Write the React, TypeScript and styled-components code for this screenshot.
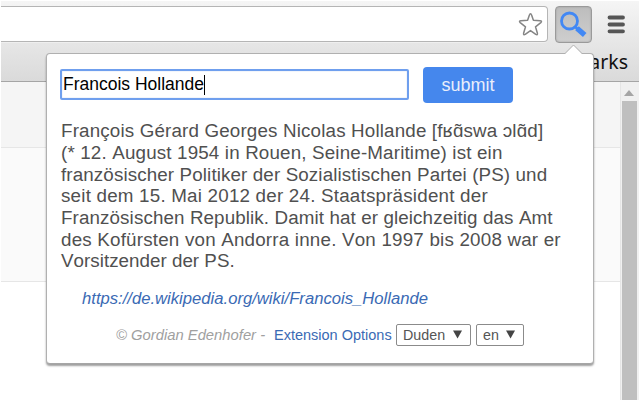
import React from "react";
import styled, { createGlobalStyle } from "styled-components";

const Global = createGlobalStyle`
  * { box-sizing: border-box; }
  body { margin: 0; background: #fff; font-family: "Liberation Sans", Arial, sans-serif; overflow: hidden; }
`;

const Window = styled.div`
  position: relative;
  width: 640px;
  height: 400px;
  padding: 1px 1px 0 1px;
  display: flex;
  flex-direction: column;
  background: #fff;
  overflow: hidden;
`;

const Chrome = styled.header`
  height: 81px;
  flex: none;
  display: flex;
  flex-direction: column;
  background: linear-gradient(#f5f5f5, #e7e7e7 50%, #dadada);
  border-bottom: 1px solid #a5a5a5;
`;

const Toolbar = styled.div`
  height: 42px;
  padding-top: 5px;
  display: flex;
  align-items: flex-start;
`;

const AddressBar = styled.div`
  width: 547px;
  height: 36px;
  padding-right: 4px;
  display: flex;
  align-items: center;
  justify-content: flex-end;
  background: #fff;
  border: 1px solid #b5b5b5;
  border-left: 0;
  border-radius: 0 4px 4px 0;
  box-shadow: 0 1px 0 #efefef;
`;

const ExtensionButton = styled.div`
  width: 37px;
  height: 37px;
  margin-left: 7px;
  display: flex;
  background: linear-gradient(#bdbdbd, #cecece);
  border: 1px solid #9a9a9a;
  border-radius: 4px;
  box-shadow: inset 0 0 2px #999;
`;

const MenuIcon = styled.svg`
  margin: 9px 0 0 15px;
`;

const Bookmarks = styled.div`
  flex: 1;
  padding-right: 11px;
  display: flex;
  justify-content: flex-end;
  font: 19.5px/37px "Noto Sans", sans-serif;
  color: #111;
`;

const Content = styled.main`
  flex: 1;
  display: flex;
`;

const Page = styled.div`
  flex: 1;
`;

const Band = styled.div<{ $height: number; $shade: string }>`
  height: ${(p) => p.$height}px;
  background: ${(p) => p.$shade};
  border-bottom: 1px solid #e6e6e6;
`;

const Scrollbar = styled.div`
  width: 19px;
  padding: 8px 2px 0 0;
  display: flex;
  flex-direction: column;
  align-items: center;
  background: #f0f0f0;
  border-left: 1px solid #e5e5e5;
`;

const Thumb = styled.div`
  width: 15px;
  flex: 1;
  margin-top: 5px;
  background: #bfbfbf;
`;

const Popup = styled.section`
  position: absolute;
  left: 46px;
  top: 53px;
  width: 548px;
  height: 311px;
  padding: 13px 14px 0 13px;
  background: #fff;
  border: 1px solid #b0b0b0;
  border-bottom-color: #a6a6a6;
  border-radius: 4px;
  box-shadow: 0 2px 2px rgba(0, 0, 0, 0.38);
`;

const Arrow = styled.svg`
  position: absolute;
  left: 517px;
  top: -10px;
`;

const SearchRow = styled.form`
  display: flex;
  align-items: flex-start;
  gap: 14px;
`;

const Query = styled.div`
  width: 349px;
  height: 31px;
  margin-top: 2px;
  padding: 1px 0 1px 1px;
  display: flex;
  align-items: center;
  border: 2px solid #6f9fee;
  border-radius: 2px;
  font-size: 17.5px;
  line-height: 25px;
  white-space: nowrap;
  color: #000;
  box-shadow: inset 0 0 1px #86a4d8;
`;

const Caret = styled.span`
  width: 1px;
  height: 20px;
  background: #000;
`;

const Submit = styled.button`
  width: 90px;
  height: 36px;
  padding: 0;
  border: 0;
  border-radius: 4px;
  background: #4587ed;
  color: #e9eefb;
  font: 18px "Liberation Sans", Arial, sans-serif;
`;

const Extract = styled.p`
  margin: 17.4px 0 0 1px;
  display: flex;
  flex-direction: column;
  font-size: 18.8px;
  line-height: 21.65px;
  white-space: nowrap;
  font-kerning: none;
  color: #505050;
`;

const Line = styled.span<{ $spacing?: number }>`
  letter-spacing: ${(p) => p.$spacing ?? 0}px;
`;

const Source = styled.a`
  display: block;
  margin: 16.6px 0 0 22px;
  font-size: 16.65px;
  line-height: 20px;
  font-style: italic;
  white-space: nowrap;
  color: #3a6ab4;
`;

const Footer = styled.footer`
  margin: 15px 0 0 56px;
  display: flex;
  align-items: center;
  font-size: 14.5px;
  line-height: 22px;
  white-space: nowrap;
`;

const Credit = styled.span`
  width: 158px;
  font-size: 14.8px;
  font-style: italic;
  color: #a0a0a0;
`;

const Options = styled.a`
  width: 122px;
  color: #3a6ab4;
`;

const Select = styled.div<{ $width: number }>`
  width: ${(p) => p.$width}px;
  height: 22px;
  margin-right: 5px;
  padding: 0 8px 0 6px;
  display: flex;
  align-items: center;
  justify-content: space-between;
  border: 1px solid #8b8b8b;
  border-radius: 2px;
  font-size: 14.3px;
  color: #555;
`;

function Triangle() {
  return (
    <svg width="9" height="9" viewBox="0 0 9 9">
      <path d="M0 0.5H9L4.5 8.5Z" fill="#444" />
    </svg>
  );
}

const lines: { text: string; spacing?: number }[] = [
  { text: "François Gérard Georges Nicolas Hollande [fʁɑ̃swa ɔlɑ̃d]", spacing: 0.16 },
  { text: "(* 12. August 1954 in Rouen, Seine-Maritime) ist ein", spacing: 0.16 },
  { text: "französischer Politiker der Sozialistischen Partei (PS) und", spacing: 0.12 },
  { text: "seit dem 15. Mai 2012 der 24. Staatspräsident der", spacing: 0.21 },
  { text: "Französischen Republik. Damit hat er gleichzeitig das Amt", spacing: 0.11 },
  { text: "des Kofürsten von Andorra inne. Von 1997 bis 2008 war er", spacing: 0.2 },
  { text: "Vorsitzender der PS.", spacing: 0.02 },
];

export default function App() {
  return (
    <Window>
      <Global />
      <Chrome>
        <Toolbar>
          <AddressBar>
            <svg width="26" height="26" viewBox="0 0 26 26">
              <path
                d="M13.5 2.8Q14.2 2.8 14.5 3.8L16.4 9.2L23 9.7Q25.5 10 23.8 11.6L18.5 15.8L20.4 22.3Q20.7 24.4 18.8 23.4L13.5 19.6L8.2 23.4Q6.3 24.4 6.6 22.3L8.5 15.8L3.2 11.6Q1.5 10 4 9.7L10.6 9.2L12.5 3.8Q12.8 2.8 13.5 2.8Z"
                fill="#fff"
                stroke="#858585"
                strokeWidth="1.5"
                strokeLinejoin="round"
              />
            </svg>
          </AddressBar>
          <ExtensionButton>
            <svg width="35" height="35" viewBox="0 0 35 35">
              <circle cx="13.5" cy="14" r="8" fill="none" stroke="#4288f4" strokeWidth="2.8" />
              <path d="M19 19.5L22 22.5" stroke="#4288f4" strokeWidth="2.8" />
              <path d="M21 21.3L28.7 28" stroke="#4288f4" strokeWidth="5.4" />
            </svg>
          </ExtensionButton>
          <MenuIcon width="19" height="20" viewBox="0 0 19 20">
            <path d="M2.5 2.5H16M2.5 9.5H16M2.5 16.3H16" stroke="#555" strokeWidth="3.8" strokeLinecap="round" />
          </MenuIcon>
        </Toolbar>
        <Bookmarks>arks</Bookmarks>
      </Chrome>
      <Content>
        <Page>
          <Band $height={66} $shade="#f5f5f5" />
          <Band $height={134} $shade="#fafafa" />
        </Page>
        <Scrollbar>
          <svg width="10" height="6" viewBox="0 0 10 6">
            <path d="M5 0L10 6H0Z" fill="#a5a5a5" />
          </svg>
          <Thumb />
        </Scrollbar>
      </Content>
      <Popup>
        <Arrow width="20" height="11" viewBox="0 0 20 11">
          <path d="M0 11V10H1L9.5 1L18 10H20V11Z" fill="#fff" />
          <path d="M1 9.5L9.5 1L18 9.5" fill="none" stroke="#b0b0b0" />
        </Arrow>
        <SearchRow>
          <Query>
            <span>Francois Hollande</span>
            <Caret />
          </Query>
          <Submit type="button">submit</Submit>
        </SearchRow>
        <Extract>
          {lines.map((line) => (
            <Line key={line.text} $spacing={line.spacing}>{line.text}</Line>
          ))}
        </Extract>
        <Source>https://de.wikipedia.org/wiki/Francois_Hollande</Source>
        <Footer>
          <Credit>© Gordian Edenhofer -</Credit>
          <Options>Extension Options</Options>
          <Select $width={75}>Duden <Triangle /></Select>
          <Select $width={48}>en <Triangle /></Select>
        </Footer>
      </Popup>
    </Window>
  );
}
